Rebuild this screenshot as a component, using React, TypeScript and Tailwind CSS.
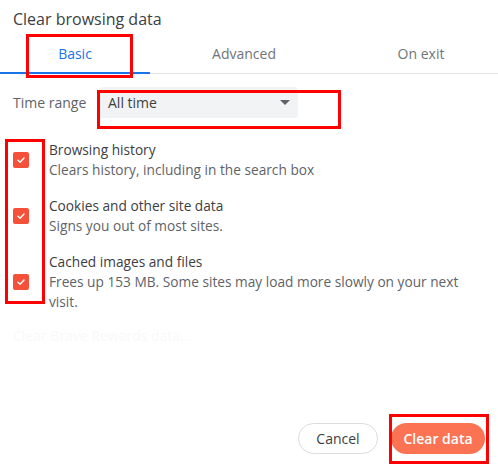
const font = { fontFamily: '"Open Sans", "Liberation Sans", sans-serif' }

const Check = () => (
  <span className="flex h-4 w-4 shrink-0 items-center justify-center rounded-[2px] bg-[#f4503a]">
    <svg width="10" height="10" viewBox="0 0 10 10" fill="none">
      <path
        d="M2 5.2 L4.1 7.2 L8 3"
        stroke="white"
        strokeWidth="1.4"
        strokeLinecap="round"
        strokeLinejoin="round"
      />
    </svg>
  </span>
)

const items = [
  {
    title: "Browsing history",
    desc: ["Clears history, including in the search box"],
  },
  {
    title: "Cookies and other site data",
    desc: ["Signs you out of most sites."],
  },
  {
    title: "Cached images and files",
    desc: [
      "Frees up 153 MB. Some sites may load more slowly on your next",
      "visit.",
    ],
  },
]

const App = () => {
  return (
    <div
      className="relative flex h-[466px] w-[498px] flex-col overflow-hidden bg-white text-[#3c4043]"
      style={font}>
      <div className="pl-[13px] pt-[9px] text-[16px] leading-[20px] text-[#3c4043]">
        Clear browsing data
      </div>

      <div className="mt-[10px] flex h-[35px] border-b border-[#e3e3e3] text-[14px]">
        <div className="relative flex w-[150px] items-center justify-center pb-[5px] font-medium text-[#1a73e8]">
          Basic
          <span className="absolute -bottom-px left-0 h-[2px] w-full bg-[#1a73e8]" />
        </div>
        <div className="flex w-[188px] items-center justify-center pb-[5px] text-[#70757a]">
          Advanced
        </div>
        <div className="flex flex-1 items-center justify-center pb-[5px] pl-[6px] text-[#70757a]">
          On exit
        </div>
      </div>

      <div className="mt-[13px] flex items-center text-[14px]">
        <div className="w-[99px] shrink-0 pl-[13px] text-[#5f6368]">Time range</div>
        <div className="flex h-[31px] w-[199px] items-center justify-between rounded-[4px] bg-[#f1f3f4] pl-[9px] pr-[8px] text-[#3c4043]">
          <span>All time</span>
          <svg width="10" height="6" viewBox="0 0 10 6">
            <path d="M0 0 H10 L5 5 Z" fill="#5f6368" />
          </svg>
        </div>
      </div>

      <div className="mt-[22px] flex flex-col gap-4">
        {items.map((item) => (
          <div key={item.title} className="flex items-center gap-5 pl-[13px]">
            <Check />
            <div className="text-[13.7px] leading-[20px]">
              <div className="text-[#3c4043]">{item.title}</div>
              {item.desc.map((d) => (
                <div key={d} className="text-[#5f6368]">
                  {d}
                </div>
              ))}
            </div>
          </div>
        ))}
      </div>

      <div className="mt-[14px] pl-[13px] text-[14px] leading-[20px] text-[#f9f9f9]">
        Clear Brave Rewards data…
      </div>

      <div className="flex-1" />

      <div className="flex justify-end gap-[13px] pb-[12px] pr-[13px] text-[14px]">
        <button className="h-[31px] w-[80px] rounded-full border border-[#dadce0] bg-white text-[#3c4043]">
          Cancel
        </button>
        <button className="h-[31px] w-[94px] rounded-full bg-[#fb7353] font-semibold text-white">
          Clear data
        </button>
      </div>

      {/* red annotation boxes */}
      <div className="absolute left-[26px] top-[34px] h-[44px] w-[107px] border-[3px] border-[#ff0000]" />
      <div className="absolute left-[97px] top-[90px] h-[39px] w-[244px] border-[3px] border-[#ff0000]" />
      <div className="absolute left-[5px] top-[139px] h-[165px] w-[40px] border-[3px] border-[#ff0000]" />
      <div className="absolute left-[389px] top-[414px] h-[50px] w-[100px] border-[3px] border-[#ff0000]" />
    </div>
  )
}

export default App
